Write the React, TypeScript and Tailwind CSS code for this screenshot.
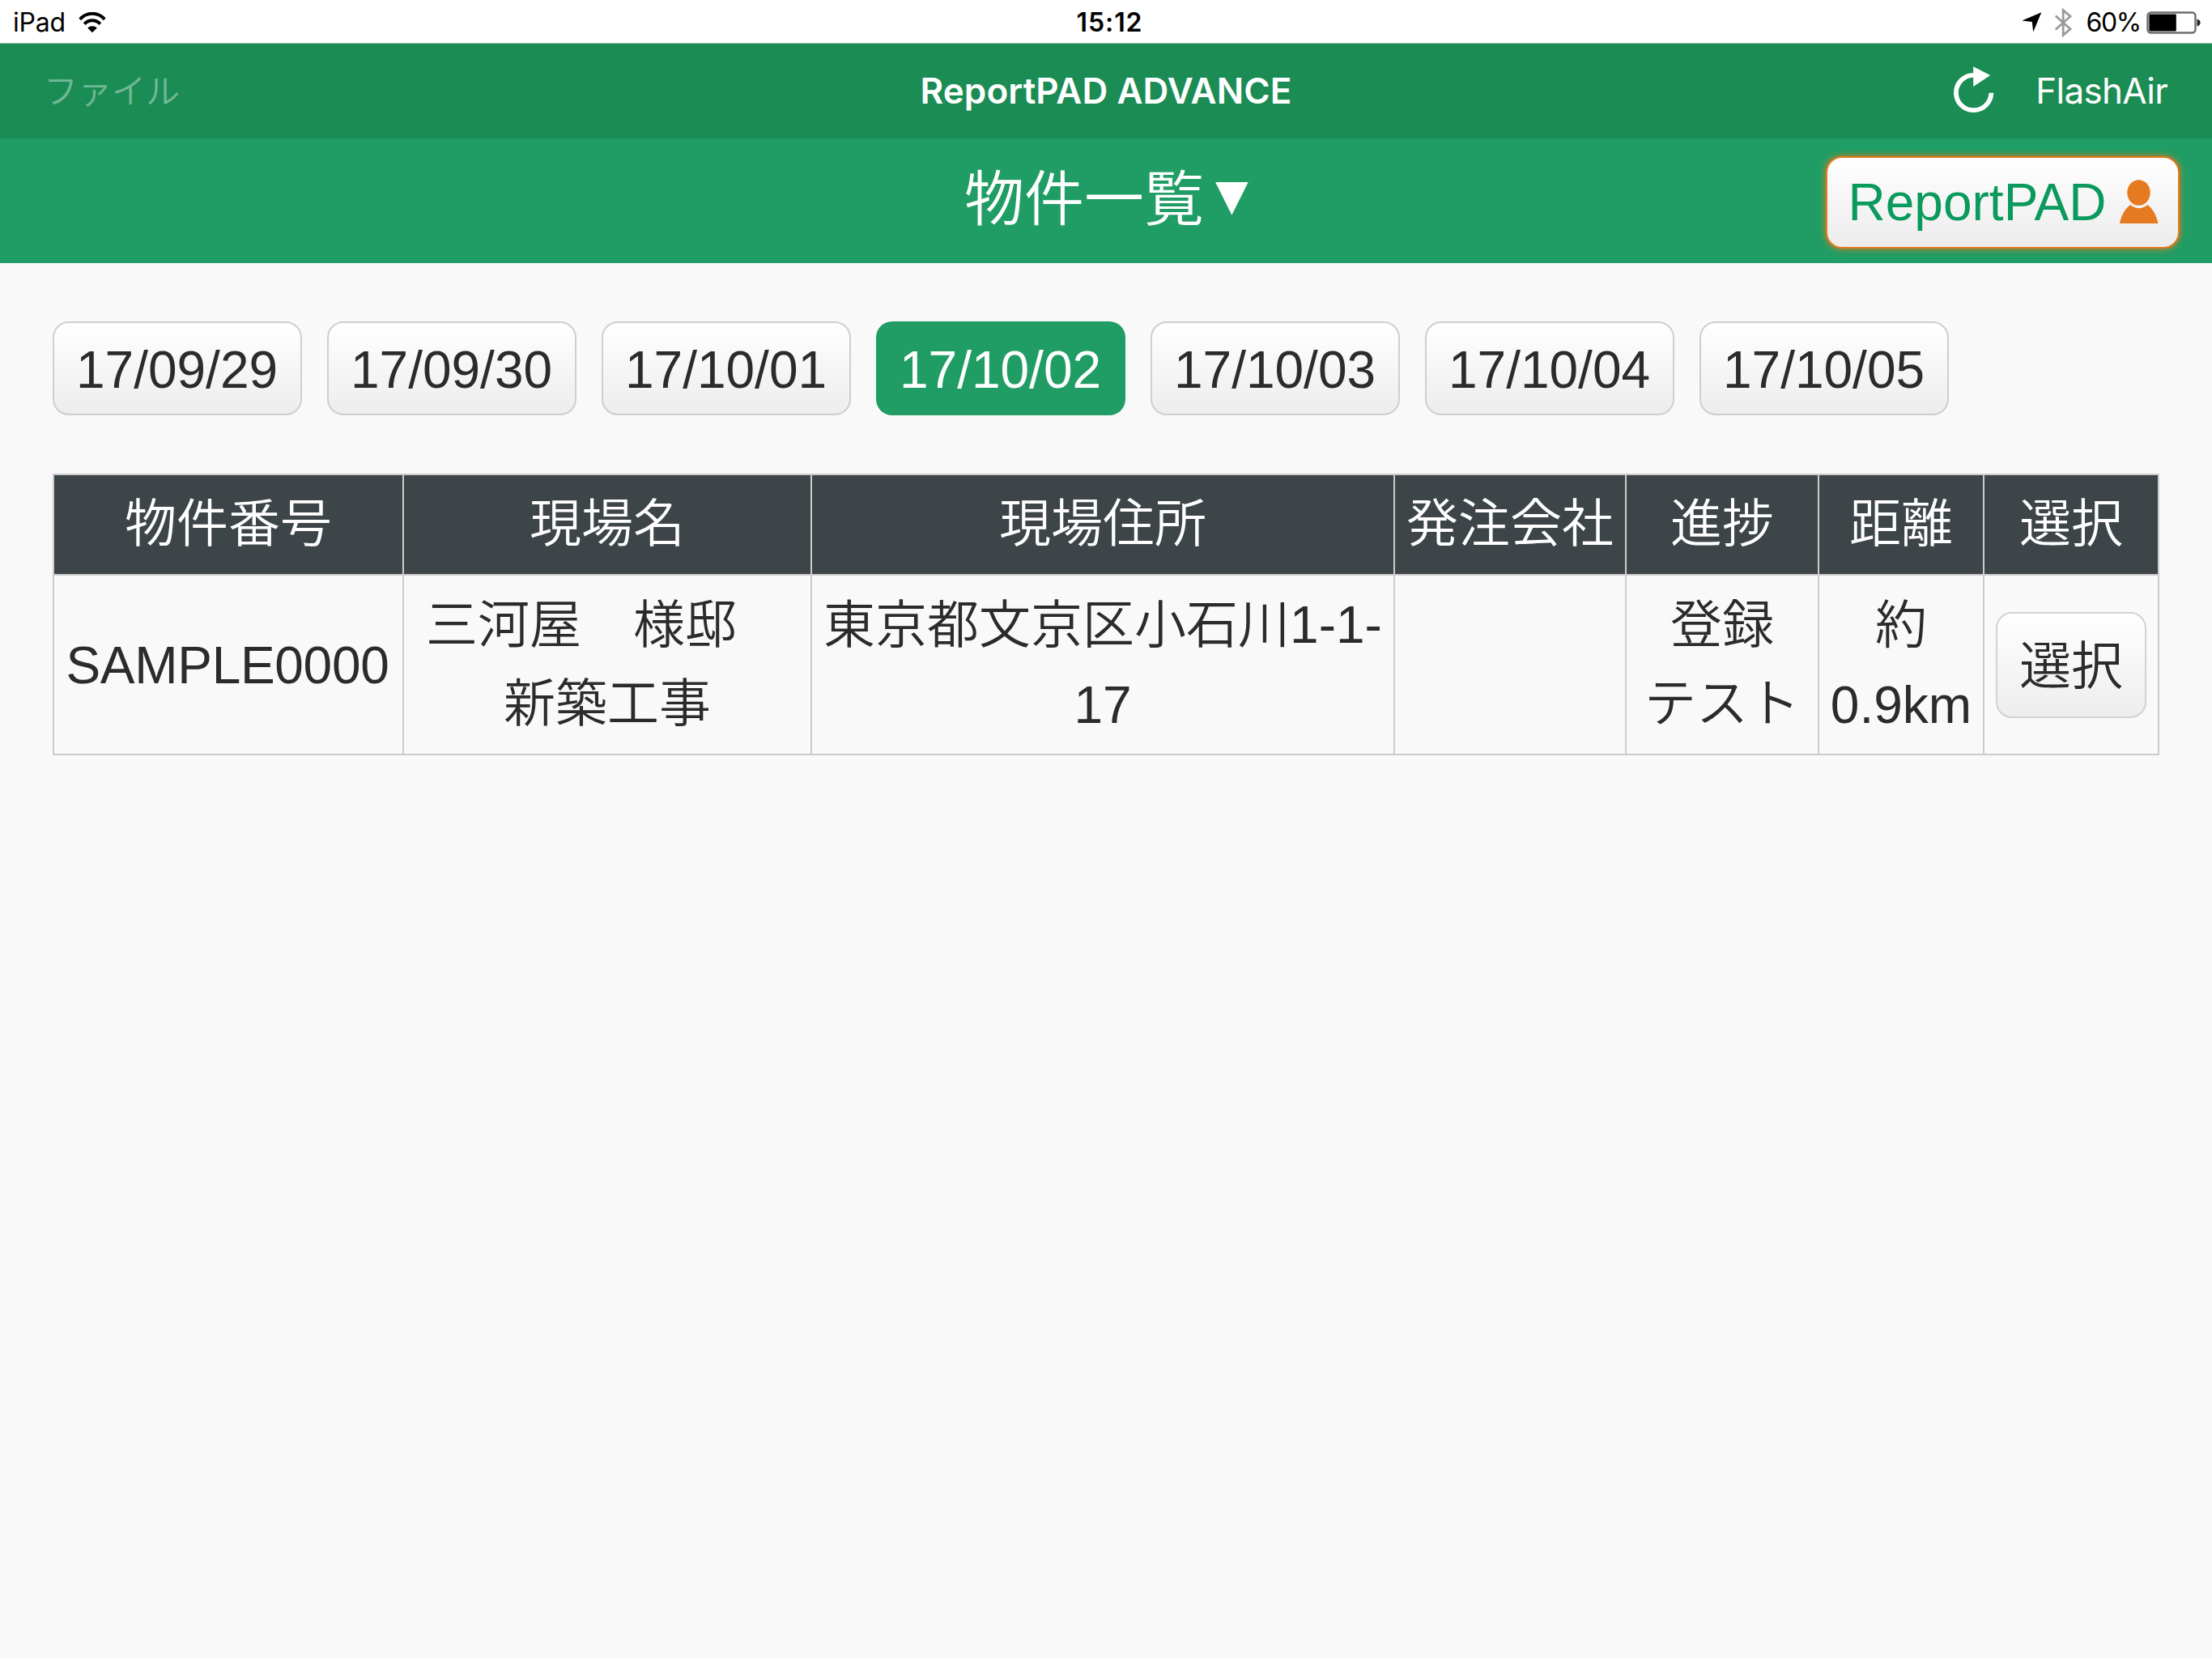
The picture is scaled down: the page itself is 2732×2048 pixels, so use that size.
const SYSTEM_FONT = "font-['Inter','Noto_Sans_CJK_JP',sans-serif]";

const dates = ["17/09/29", "17/09/30", "17/10/01", "17/10/02", "17/10/03", "17/10/04", "17/10/05"];
const selectedDate = "17/10/02";

const columns = ["物件番号", "現場名", "現場住所", "発注会社", "進捗", "距離", "選択"];

function WifiIcon() {
  return (
    <svg className="ml-[16px] h-[26px] w-[34px]" viewBox="0 0 34 26" fill="none" stroke="#000">
      <path d="M1.8 8.8C10.2 -0.6 23.8 -0.6 32.2 8.8" strokeWidth="4" />
      <path d="M7.2 14.6C12.6 8.8 21.4 8.8 26.8 14.6" strokeWidth="4" />
      <path d="M17 25.2L11.2 19.4C14.4 16.4 19.6 16.4 22.8 19.4Z" fill="#000" stroke="none" />
    </svg>
  );
}

function LocationIcon() {
  return (
    <svg className="h-[25px] w-[25px]" viewBox="0 0 25 25">
      <path d="M24.3 0.2L0.3 10.6L12.8 11.9L14.2 24.5Z" fill="#000" />
    </svg>
  );
}

function BluetoothIcon() {
  return (
    <svg className="ml-[16px] h-[36px] w-[21px]" viewBox="0 0 21 36" fill="none" stroke="#9a9a9a" strokeWidth="2.8">
      <path d="M0.8 9.5L19 25.8L10.2 33.4V2.6L19 10.2L0.8 26.5" />
    </svg>
  );
}

function BatteryIcon() {
  return (
    <svg className="ml-[7px] h-[28px] w-[68px]" viewBox="0 0 68 28">
      <rect x="1.5" y="1.5" width="59" height="25" rx="4" fill="none" stroke="#6d6d6d" strokeWidth="2.4" />
      <rect x="3.4" y="3.6" width="33.4" height="20.8" rx="1" fill="#000" />
      <path d="M62.5 9.5C68 10.5 68 17.5 62.5 18.5Z" fill="#222" />
    </svg>
  );
}

function ReloadIcon() {
  return (
    <svg className="-mt-[2px] h-[60px] w-[52px]" viewBox="0 0 52 60">
      <path d="M47.3 33.8A21.7 21.7 0 1 1 25.6 11.8" fill="none" stroke="#fff" strokeWidth="5.8" />
      <path d="M25.2 1.2V26L46.2 12Z" fill="#fff" />
    </svg>
  );
}

function UserIcon() {
  return (
    <svg className="-mt-[2px] h-[54px] w-[48px]" viewBox="0 0 48 54" fill="#e67a20">
      <ellipse cx="23.5" cy="16" rx="14.2" ry="15.8" />
      <path d="M0 54C2 44 6.500 36 13 31C19.500 36.500 28 36.500 34.500 31C41 36 45.500 44 47.500 54Z" />
    </svg>
  );
}

function StatusBar() {
  return (
    <div className={`grid h-[53px] grid-cols-3 items-center bg-white pt-[2px] text-[32px] leading-none text-black ${SYSTEM_FONT}`}>
      <div className="flex items-center pl-[16px]">
        <span className="tracking-[-0.2px]">iPad</span>
        <WifiIcon />
      </div>
      <div className="pl-[9px] text-center font-semibold tracking-[0.9px]">15:12</div>
      <div className="flex items-center justify-end pr-[13px]">
        <LocationIcon />
        <BluetoothIcon />
        <span className="ml-[17px] tracking-[-1.3px]">60%</span>
        <BatteryIcon />
      </div>
    </div>
  );
}

function NavBar() {
  return (
    <nav className={`grid h-[118px] grid-cols-3 items-center border-t border-[#8cc7a8] bg-[#1b8c54] text-[44px] leading-none text-white ${SYSTEM_FONT}`}>
      <div className="pl-[54px] text-[42px] font-[350] text-white/40">ファイル</div>
      <div className="-mt-[1px] text-center font-semibold tracking-[0.1px]">ReportPAD ADVANCE</div>
      <div className="-mt-[1px] flex items-center justify-end pr-[55px]">
        <ReloadIcon />
        <span className="ml-[50px] tracking-[-0.7px]">FlashAir</span>
      </div>
    </nav>
  );
}

function TitleBar() {
  return (
    <header className="grid h-[154px] grid-cols-3 items-center bg-[#209d64]">
      <div />
      <h1 className="-mt-[3px] flex items-center justify-center pl-[1px] text-[74px] leading-none font-[350] text-white">
        <span>物件一覧</span>
        <span className="-mt-[12px] ml-[14px] text-[53px] font-normal font-['DejaVu_Sans',sans-serif]">▼</span>
      </h1>
      <div className="flex justify-end pt-[3px] pr-[40px]">
        <button className="flex h-[114px] w-[437px] items-center justify-center gap-[17px] rounded-[20px] border-2 border-[#e67a20] bg-linear-to-b from-white to-[#ececec] pt-[1px] pl-[2px] text-[64px] leading-none text-[#0a9a5c] shadow-[0_0_8px_#e67a20]">
          <span>ReportPAD</span>
          <UserIcon />
        </button>
      </div>
    </header>
  );
}

function DateTabs() {
  return (
    <div className="flex gap-[31px] px-[64.5px] pt-[72px]">
      {dates.map((date) => (
        <button
          key={date}
          className={
            date === selectedDate
              ? "h-[116px] w-[308px] rounded-[20px] bg-[#209d64] pt-[3px] text-white"
              : "h-[116px] w-[308px] rounded-[20px] border-[2px] border-[#cfcfcf] bg-linear-to-b from-white to-[#ededed] pt-[3px]"
          }
        >
          {date}
        </button>
      ))}
    </div>
  );
}

function PropertyTable() {
  const cell = "flex flex-col items-center justify-center border-r-2 border-[#cccccc] text-center";
  return (
    <div className="mx-[65px] mt-[72px] w-[2602px] border-y-2 border-l-2 border-[#cccccc] leading-[97px]">
      <div className="grid h-[122px] grid-cols-[432px_504px_720px_286px_238px_204px_216px] bg-[#3d4548] pb-px font-[350] text-white">
        {columns.map((name) => (
          <div key={name} className={`${cell} -mb-px pb-px`}>{name}</div>
        ))}
      </div>
      <div className="grid h-[222px] grid-cols-[432px_504px_720px_286px_238px_204px_216px] border-t-2 border-[#cccccc]">
        <div className={`${cell} pt-[3px] pr-[2px] tracking-[-0.3px]`}>SAMPLE0000</div>
        <div className={`${cell} font-[350]`}>
          <div className="whitespace-pre">三河屋　様邸　</div>
          <div>新築工事</div>
        </div>
        <div className={`${cell} font-[350]`}>
          <div>東京都文京区小石川1-1-</div>
          <div className="pt-[2px] -mb-[2px]">17</div>
        </div>
        <div className={cell} />
        <div className={`${cell} font-[350]`}>
          <div>登録</div>
          <div>テスト</div>
        </div>
        <div className={`${cell} font-[350]`}>
          <div>約</div>
          <div className="pt-[2px] -mb-[2px]">0.9km</div>
        </div>
        <div className={cell}>
          <button className="h-[131px] w-[186px] rounded-[20px] border-[2px] border-[#d2d2d2] bg-linear-to-b from-white to-[#ededed] pt-[5px] font-[350]">
            選択
          </button>
        </div>
      </div>
    </div>
  );
}

export default function App() {
  return (
    <div className="h-[2048px] w-[2732px] overflow-hidden bg-[#f9f9f9] font-['Liberation_Sans','Noto_Sans_CJK_JP',sans-serif] text-[64px] leading-none text-[#2b2b2b]">
      <StatusBar />
      <NavBar />
      <TitleBar />
      <DateTabs />
      <PropertyTable />
    </div>
  );
}
